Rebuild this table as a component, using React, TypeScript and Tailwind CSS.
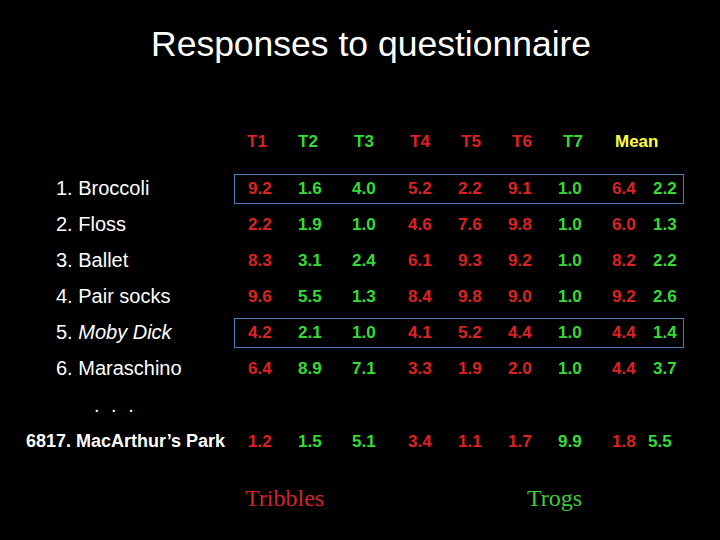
const RED = "text-[#de2020]";
const GREEN = "text-[#33dd33]";

// colour per column: T1..T7, mean, sd
const colColors = [RED, GREEN, GREEN, RED, RED, RED, GREEN, RED, GREEN];
// widths of the value cells inside the box (first one carries the left padding)
const cellWidths = ["w-[63px] pl-[13px]", "w-[54px]", "w-[56px]", "w-[50px]", "w-[50px]", "w-[50px]", "w-[54px]", "w-[41px]", "w-[30px]"];

const rows: { label: React.ReactNode; values: string[]; boxed?: boolean }[] = [
  { label: "1. Broccoli", values: ["9.2", "1.6", "4.0", "5.2", "2.2", "9.1", "1.0", "6.4", "2.2"], boxed: true },
  { label: "2. Floss", values: ["2.2", "1.9", "1.0", "4.6", "7.6", "9.8", "1.0", "6.0", "1.3"] },
  { label: "3. Ballet", values: ["8.3", "3.1", "2.4", "6.1", "9.3", "9.2", "1.0", "8.2", "2.2"] },
  { label: "4. Pair socks", values: ["9.6", "5.5", "1.3", "8.4", "9.8", "9.0", "1.0", "9.2", "2.6"] },
  {
    label: (
      <>
        5. <span className="italic">Moby Dick</span>
      </>
    ),
    values: ["4.2", "2.1", "1.0", "4.1", "5.2", "4.4", "1.0", "4.4", "1.4"],
    boxed: true,
  },
  { label: "6. Maraschino", values: ["6.4", "8.9", "7.1", "3.3", "1.9", "2.0", "1.0", "4.4", "3.7"] },
];

const headers = [
  { t: "T1", c: RED, w: "w-[64px] pl-[13px]" },
  { t: "T2", c: GREEN, w: "w-[56px]" },
  { t: "T3", c: GREEN, w: "w-[56px]" },
  { t: "T4", c: RED, w: "w-[51px]" },
  { t: "T5", c: RED, w: "w-[51px]" },
  { t: "T6", c: RED, w: "w-[51px]" },
  { t: "T7", c: GREEN, w: "w-[52px]" },
  { t: "Mean", c: "text-[#ffff40]", w: "w-[70px]" },
];

function Values({ values, boxed, lastShift }: { values: string[]; boxed?: boolean; lastShift?: boolean }) {
  return (
    <div
      className={`flex h-[30px] w-[450px] items-center border mt-[2px] ${
        boxed ? "border-[#4a7cb8]" : "border-transparent"
      }`}
    >
      {values.map((v, i) => (
        <div
          key={i}
          className={`${lastShift && i === 7 ? "w-[36px]" : cellWidths[i]} ${colColors[i]} shrink-0 text-[17px] font-bold`}
        >
          {v}
        </div>
      ))}
    </div>
  );
}

export default function App() {
  return (
    <div className="w-[720px] h-[540px] bg-black overflow-hidden font-['Liberation_Sans',Arial,sans-serif] text-white">
      <div className="pt-[27px] pl-[151px] text-[35.5px] leading-[35px]">Responses to questionnaire</div>

      <div className="mt-[62px] flex h-[36px] items-center">
        <div className="w-[234px] shrink-0" />
        {headers.map((h) => (
          <div key={h.t} className={`${h.w} ${h.c} shrink-0 text-[17px] font-bold`}>
            {h.t}
          </div>
        ))}
      </div>

      <div className="mt-[10px]">
        {rows.map((r, i) => (
          <div key={i} className="flex h-[36px] items-center">
            <div className="w-[234px] shrink-0 pl-[56px] text-[20px]">{r.label}</div>
            <Values values={r.values} boxed={r.boxed} />
          </div>
        ))}
        <div className="flex h-[37px] items-center pl-[94px] text-[20px] tracking-[3px]">. . .</div>
        <div className="flex h-[36px] items-center">
          <div className="w-[234px] shrink-0 pl-[26px] text-[18px] font-bold">6817. MacArthur’s Park</div>
          <Values values={["1.2", "1.5", "5.1", "3.4", "1.1", "1.7", "9.9", "1.8", "5.5"]} lastShift />
        </div>
      </div>

      <div className="mt-[21px] flex h-[36px] items-center font-['Liberation_Serif','Times_New_Roman',serif] text-[24px]">
        <div className="w-[527px] shrink-0 pl-[245px] text-[#d42424]">Tribbles</div>
        <div className="text-[#3ccc3c]">Trogs</div>
      </div>
    </div>
  );
}
